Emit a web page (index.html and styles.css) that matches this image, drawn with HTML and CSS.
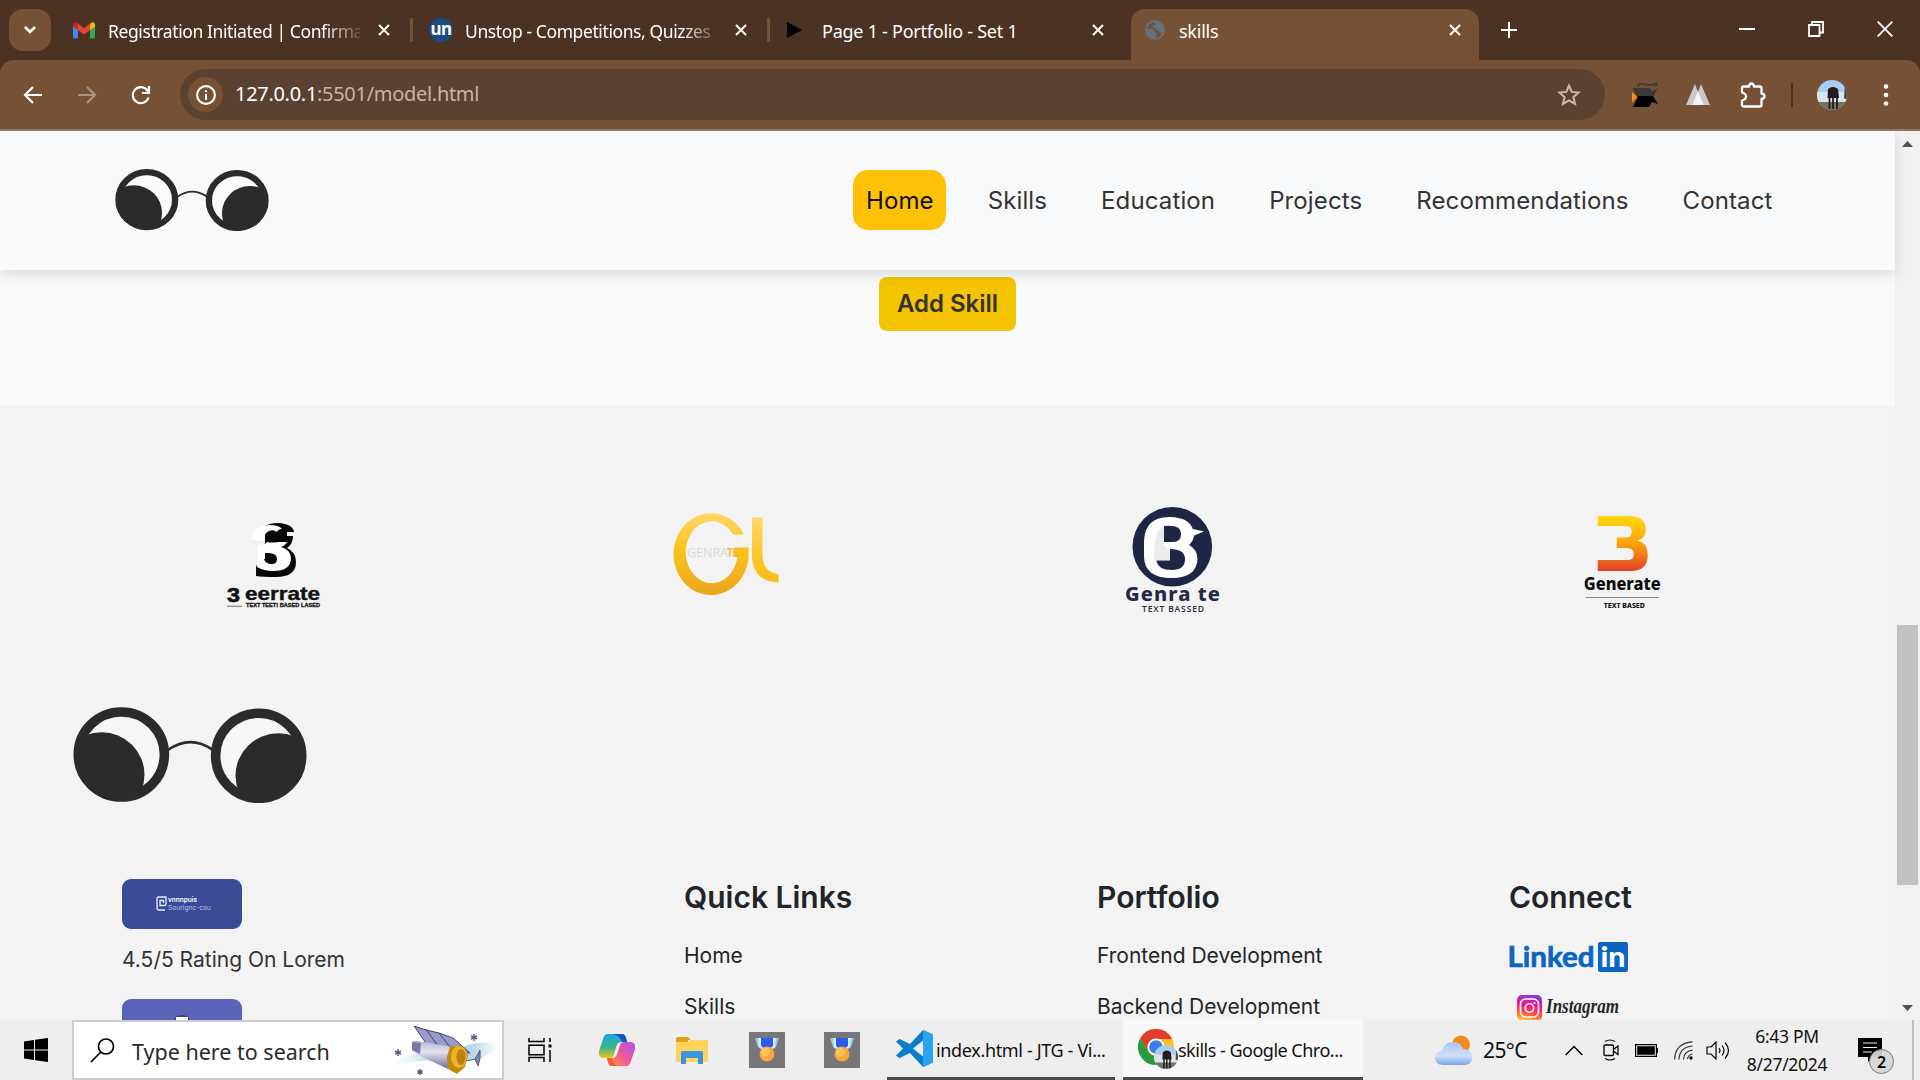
FILE: index.html
```html
<!DOCTYPE html>
<html lang="en">
<head>
<meta charset="utf-8">
<title>skills</title>
<link rel="stylesheet" href="styles.css">
</head>
<body>
<svg class="defs" width="0" height="0">
  <defs>
    <symbol id="glasses" viewBox="70 79 702 291" preserveAspectRatio="none">
      <path d="M355 209Q422 162 488 208" fill="none" stroke="#2b2b2b" stroke-width="8"/>
      <clipPath id="lensL"><circle cx="215" cy="223" r="130"/></clipPath>
      <clipPath id="lensR"><circle cx="627" cy="227" r="130"/></clipPath>
      <circle cx="215" cy="223" r="129" fill="none" stroke="#2b2b2b" stroke-width="29"/>
      <circle cx="627" cy="227" r="129" fill="none" stroke="#2b2b2b" stroke-width="29"/>
      <circle cx="215" cy="223" r="115" fill="#fff" fill-opacity=".3"/>
      <circle cx="627" cy="227" r="115" fill="#fff" fill-opacity=".3"/>
      <circle cx="156" cy="284" r="128.500" fill="#2b2b2b" clip-path="url(#lensL)"/>
      <circle cx="686" cy="287" r="128.500" fill="#2b2b2b" clip-path="url(#lensR)"/>
    </symbol>
    <symbol id="close" viewBox="0 0 12 12"><path d="M1 1l10 10M11 1L1 11" stroke="#fff" stroke-width="2" fill="none"/></symbol>
    <symbol id="medal" viewBox="0 0 36 36">
      <rect width="36" height="36" fill="#777"/>
      <path d="M6 6h24l-3 9-5 4h-8l-5-4z" fill="#8fc7ff"/>
      <path d="M9 6h4v11l-3-2zM27 6h-4v11l3-2z" fill="#dceeff"/>
      <path d="M12 6h12v8l-6 4-6-4z" fill="#2f5bea"/>
      <circle cx="18" cy="22" r="7.500" fill="#f9a63a"/><circle cx="16.500" cy="20" r="4.500" fill="#ffc65c"/>
    </symbol>
    <clipPath id="avatarClip"><circle cx="15" cy="15" r="15"/></clipPath>
    <symbol id="avatar" viewBox="0 0 30 30">
      <g clip-path="url(#avatarClip)">
        <rect width="30" height="30" fill="#a9cdf0"/><rect y="12" width="30" height="10" fill="#dbe4ea"/>
        <rect y="22" width="30" height="8" fill="#6f7560"/>
        <path d="M28 4l2 2v14l-3-2z" fill="#4b4a3a"/>
        <path d="M11 9q5-4 10 0l1 9H10.500z" fill="#241c1c"/>
        <path d="M12.500 17v12M16 17v12M20 17v12" stroke="#241c1c" stroke-width="1.800"/>
      </g>
    </symbol>
  </defs>
</svg>

<div class="tabstrip">
  <div class="tab-search"><svg width="14" height="10" viewBox="0 0 14 10"><path d="M2 2l5 5 5-5" fill="none" stroke="#fff" stroke-width="2.500"/></svg></div>
  <div class="tab">
    <span class="tab-icon"><svg width="22" height="17" viewBox="0 0 22 17"><path d="M0 3v12q0 1.500 1.500 1.500H5V6z" fill="#4285f4"/><path d="M22 3v12q0 1.500-1.500 1.500H17V6z" fill="#34a853"/><path d="M17 2v6l5-3.500V2.500Q21-1 18 .8z" fill="#fbbc04"/><path d="M5 2v6L0 4.500V2.500Q1-1 4 .8z" fill="#c5221f"/><path d="M4.800 1.500L11 6.200l6.200-4.700V8L11 12.500 4.800 8z" fill="#ea4335"/></svg></span>
    <span class="tab-title long">Registration Initiated | Confirma</span>
    <svg class="tab-close" width="12" height="12"><use href="#close"/></svg>
  </div>
  <div class="tab">
    <span class="tab-icon"><span class="un">un</span></span>
    <span class="tab-title long">Unstop - Competitions, Quizzes</span>
    <svg class="tab-close" width="12" height="12"><use href="#close"/></svg>
  </div>
  <div class="tab plain">
    <span class="tab-icon play"><svg width="15" height="16" viewBox="0 0 15 16"><path d="M0 0l15 8-15 8z" fill="#000"/></svg></span>
    <span class="tab-title">Page 1 - Portfolio - Set 1</span>
    <svg class="tab-close" width="12" height="12"><use href="#close"/></svg>
  </div>
  <div class="tab active">
    <span class="tab-icon"><svg width="20" height="20" viewBox="0 0 20 20"><circle cx="10" cy="10" r="9" fill="none" stroke="#64707b" stroke-width="2"/><path d="M1.500 9h6q2 0 2 2t2 2v4l-1 2q-9 0-9-10zM10 1h3l5 5v6l-3 1q-1-3-4-3V8H8V5h2z" fill="#64707b"/></svg></span>
    <span class="tab-title">skills</span>
    <svg class="tab-close" width="12" height="12"><use href="#close"/></svg>
  </div>
  <svg class="new-tab" width="16" height="16" viewBox="0 0 16 16"><path d="M8 0v16M0 8h16" stroke="#fff" stroke-width="2"/></svg>
  <div class="window-controls">
    <svg width="16" height="16" viewBox="0 0 16 16"><path d="M0 8h16" stroke="#fff" stroke-width="2"/></svg>
    <svg width="16" height="16" viewBox="0 0 16 16"><path d="M1 4h10.500v11H1zM4 4V1h11v10.500h-3.500" fill="none" stroke="#fff" stroke-width="1.800"/></svg>
    <svg width="16" height="16" viewBox="0 0 16 16"><path d="M.7.7l14.600 14.600M15.300.7L.7 15.300" stroke="#fff" stroke-width="1.800"/></svg>
  </div>
</div>

<div class="toolbar-wrap">
<div class="toolbar">
  <div class="nav-buttons">
    <svg width="20" height="20" viewBox="0 0 20 20"><path d="M19 10H2.500M10 2l-8 8 8 8" fill="none" stroke="#fff" stroke-width="2.200"/></svg>
    <svg width="20" height="20" viewBox="0 0 20 20"><path d="M1 10h16.500M10 2l8 8-8 8" fill="none" stroke="#ad9482" stroke-width="2.200"/></svg>
    <svg width="20" height="20" viewBox="0 0 20 20"><path d="M17.500 12.500A8 8 0 1 1 16 5l1.500 2M18 1v7h-7" fill="none" stroke="#fff" stroke-width="2.200"/></svg>
  </div>
  <div class="omnibox">
    <span class="site-info"><svg width="20" height="20" viewBox="0 0 20 20"><circle cx="10" cy="10" r="8.900" fill="none" stroke="#fff" stroke-width="2.100"/><path d="M10 9v6M10 5.200v2.100" stroke="#fff" stroke-width="2"/></svg></span>
    <span class="url"><b>127.0.0.1</b>:5501/model.html</span>
    <svg class="star" width="24" height="24" viewBox="0 0 24 24"><path d="M12 2.500l2.700 6.400 7 .6-5.300 4.600 1.600 6.800-6-3.600-6 3.600 1.600-6.800L2.300 9.500l7-.6z" fill="none" stroke="#c6bab2" stroke-width="2"/></svg>
  </div>
  <svg class="ext-a" width="26" height="26" viewBox="0 0 26 26"><path d="M0 10l5 5-5 6z" fill="#ff8a1c"/><path d="M1 6h16l3 4 5-3-4 7 5 8-6-2-3 5H1l5-10z" fill="#000"/><path d="M1 6h16l3 4 5-3-4 7H6z" fill="#3a3a3a"/><path d="M6 5Q6 1 11 2t7 1 7-1" fill="none" stroke="#3a3a3a" stroke-width="1.800"/><circle cx="23.500" cy="2.500" r="2" fill="#3a3a3a"/></svg>
  <svg class="ext-b" width="24" height="21" viewBox="0 0 24 21"><path d="M9 0l8 21H0zM15 0l9 21H7z" fill="#c9c9c9"/><path d="M12 7l5.500 14H6.500z" fill="#f5f5f5"/></svg>
  <svg class="ext-c" width="26" height="26" viewBox="0 0 26 26"><path d="M3.500 4.500h5.500q.5-3 2.500-3t2.500 3h6q1.500 0 1.500 1.500v5.500q3 .5 3 2.800t-3 2.700V23q0 1.500-1.500 1.500h-16Q2 24.500 2 23v-4.500q4-1 4-4t-4-4V6q0-1.500 1.500-1.500z" fill="none" stroke="#fff" stroke-width="2.300" stroke-linejoin="round"/></svg>
  <span class="bar-sep"></span>
  <svg class="profile" width="30" height="30"><use href="#avatar"/></svg>
  <svg class="menu" width="6" height="24" viewBox="0 0 6 24"><g fill="#fff"><circle cx="3" cy="3.500" r="2.300"/><circle cx="3" cy="12" r="2.300"/><circle cx="3" cy="20.500" r="2.300"/></g></svg>
</div>
</div>

<div class="viewport">
  <div class="page">
    <header class="site-header">
      <svg class="brand" width="154" height="62"><use href="#glasses"/></svg>
      <nav class="site-nav">
        <a class="current">Home</a><a>Skills</a><a>Education</a><a>Projects</a><a>Recommendations</a><a>Contact</a>
      </nav>
    </header>
    <section class="skills"><button class="add-skill">Add Skill</button></section>
    <footer class="site-footer">
      <div class="partners">
        <svg width="120" height="110" viewBox="213 503 120 110">
          <path d="M262 528q6-5 16-5 15 1 16 9h-7v4h6q0 8-6 12 9 4 9 14 0 15-20 15-13 0-20-1v-9l9-24V531z" fill="#050808"/>
          <path d="M251 540q3-14 18-15 10 0 13 4-4 0-5 3-4-3-8-1-5 2-5 9v1h-6v-1z" fill="#fff"/>
          <path d="M258 545q8 0 9-3 4 1 12 0h8q-2 4-6 5 10 3 10 11 0 13-18 13-9 0-16-4v-8h7q1 5 8 5 5 0 5-5 0-6-9-6h-3v6h-7z" fill="#fff"/>
          <g font-family="Liberation Sans" font-weight="700" fill="#111">
            <text x="227" y="602" font-size="20" textLength="13" lengthAdjust="spacingAndGlyphs" stroke="#111" stroke-width=".6">3</text>
            <text x="245" y="600" font-size="18.500" textLength="75" lengthAdjust="spacingAndGlyphs" stroke="#111" stroke-width=".4">eerrate</text>
            <text x="246" y="607" font-size="5.500" textLength="74" lengthAdjust="spacingAndGlyphs" stroke="#111" stroke-width=".3">TEXT TEET! BASED LASED</text>
          </g>
          <path d="M227 606.300h15" stroke="#999" stroke-width="1.500"/>
        </svg>
        <svg width="120" height="110" viewBox="662 504.500 120 110">
          <defs><linearGradient id="gold" gradientUnits="userSpaceOnUse" x1="0" y1="514" x2="0" y2="596"><stop offset="0" stop-color="#ffd76a"/><stop offset=".45" stop-color="#fcc21c"/><stop offset="1" stop-color="#e9a61e"/></linearGradient><linearGradient id="gold2" x1="0" y1="0" x2="0" y2="1"><stop offset="0" stop-color="#ffd76a"/><stop offset=".6" stop-color="#fdc62c"/><stop offset="1" stop-color="#fbbc14"/></linearGradient></defs>
          <path d="M744 536H733A26 31 0 1 0 737.500 558H735V549H748.500V553A37.500 41 0 1 1 744 536z" fill="url(#gold)"/>
          <path d="M752 519h10.500v39q1 16 16 17.500v8.500q-26-1-26.500-27z" fill="url(#gold2)"/>
          <text x="687" y="558" font-family="Open Sans" font-size="12" fill="#d9d9d9" textLength="41" lengthAdjust="spacingAndGlyphs">GENRA</text>
          <text x="727" y="558" font-family="Liberation Sans" font-weight="700" font-size="12" fill="#fbb815" textLength="12" lengthAdjust="spacingAndGlyphs">TE</text>
        </svg>
        <svg width="120" height="110" viewBox="1112 503 120 110">
          <circle cx="1172.300" cy="546.700" r="39.800" fill="#1d2644"/>
          <path d="M1193 529l11 2.500-11 4.500z" fill="#fff"/>
          <path d="M1144 541q1-24 25-24 24 0 25 18 0 5-5 10 8 4 8.500 14-1 19-25.500 19-28 0-28-22z" fill="#fff"/>
          <path d="M1164 527l-5 3q-5 6-5 30h16v-9l-6-6z" fill="#ececec"/>
          <path d="M1164 526q17-2 17 8 0 8-8 8h-9zM1170 549q15 0 15 10 0 11-13 11-14 0-15.500-9.500H1170z" fill="#1d2644"/>
          <g fill="#222a47">
            <text x="1125" y="601" font-family="Noto Sans" font-size="20" font-weight="800" textLength="95" lengthAdjust="spacing">Genra te</text>
            <text x="1142" y="611.500" font-family="Open Sans" font-size="8.500" font-weight="600" textLength="62" lengthAdjust="spacing">TEXT BASSED</text>
          </g>
        </svg>
        <svg width="120" height="110" viewBox="1561.250 503 120 110">
          <defs><linearGradient id="fire" x1="0" y1="0" x2="0" y2="1"><stop offset="0" stop-color="#ffd90a"/><stop offset=".5" stop-color="#fba30c"/><stop offset="1" stop-color="#e0402a"/></linearGradient></defs>
          <path d="M1598 516h32q16 0 16 14 0 8-8 10.500 10 2 10 14.500 0 16-17 16h-33v-11h30q6 0 6-6 0-6-7-6h-10v-10.500h9q6 0 6-6 0-5.500-6-5.500h-28z" fill="url(#fire)"/>
          <text x="1584" y="589.500" font-family="Noto Sans" font-weight="800" font-size="17" fill="#0a0a0a" textLength="77" lengthAdjust="spacingAndGlyphs">Generate</text>
          <path d="M1586 597.500h73" stroke="#888" stroke-width="1"/>
          <text x="1604" y="607.700" font-family="Noto Sans" font-weight="800" font-size="6.800" fill="#0a0a0a" textLength="41" lengthAdjust="spacingAndGlyphs">TEXT BASED</text>
        </svg>
      </div>
      <svg class="footer-brand" width="234" height="96"><use href="#glasses"/></svg>
      <div class="footer-cols">
        <div class="ratings">
          <div class="badge-card">
            <svg width="120" height="50" viewBox="0 0 120 50"><path d="M35 19.500q0-1.500 1.500-1.500H44v7q0 1.500-1.500 1.500H38V21.500h3.500v2.500M35 19v7q0 1 1 1M35 27.500V29q0 2 2 2h6" fill="none" stroke="#e8ebf7" stroke-width="1.300"/><text x="46" y="23.300" font-family="Inter" font-weight="600" font-size="6.500" fill="#fff" textLength="29" lengthAdjust="spacingAndGlyphs">vnnnpuis</text><text x="46" y="31" font-family="Inter" font-size="6.500" fill="#b9c2e6" textLength="43" lengthAdjust="spacingAndGlyphs">Sourignc-cou</text></svg>
          </div>
          <p>4.5/5 Rating On Lorem</p>
          <div class="badge-card light">
            <svg width="120" height="50" viewBox="0 0 120 50"><path d="M52 21q2-5 8-5t8 5z" fill="#384684"/><rect x="54" y="18" width="12" height="8" fill="#fffdf0"/></svg>
          </div>
        </div>
        <div class="col"><h3>Quick Links</h3><a>Home</a><a>Skills</a></div>
        <div class="col"><h3>Portfolio</h3><a>Frontend Development</a><a>Backend Development</a></div>
        <div class="col">
          <h3>Connect</h3>
          <svg class="linkedin" width="122" height="32" viewBox="-2 0 122 32"><text x="-1.500" y="26" font-family="Lato" font-weight="700" font-size="29" fill="#0a66c2" stroke="#0a66c2" stroke-width=".7" textLength="87" lengthAdjust="spacingAndGlyphs">Linked</text><rect x="89" y="1" width="30" height="30" rx="2" fill="#0a66c2"/><text x="91.500" y="26" font-family="Lato" font-weight="900" font-size="28" fill="#fff" textLength="25" lengthAdjust="spacingAndGlyphs">in</text></svg>
          <svg class="instagram" width="120" height="34" viewBox="0 0 120 34"><defs><linearGradient id="ig" x1=".3" y1="1" x2=".5" y2="0"><stop offset="0" stop-color="#fecb4a"/><stop offset=".3" stop-color="#ff5a3c"/><stop offset=".6" stop-color="#f5148c"/><stop offset="1" stop-color="#8a3ad8"/></linearGradient></defs><rect x="8" y="0" width="25" height="26" rx="5" fill="url(#ig)"/><rect x="11.500" y="4" width="18" height="18" rx="5" fill="none" stroke="#fff" stroke-width="1.600"/><circle cx="20.500" cy="13" r="4.200" fill="none" stroke="#fff" stroke-width="1.600"/><circle cx="25.500" cy="8" r="1.100" fill="#fff"/><text x="37" y="18" font-family="Liberation Serif" font-style="italic" font-weight="700" font-size="20" fill="#262626" textLength="73" lengthAdjust="spacingAndGlyphs">Instagram</text></svg>
        </div>
      </div>
    </footer>
  </div>
  <div class="scrollbar">
    <svg width="11" height="6" viewBox="0 0 11 6"><path d="M0 6l5.500-6L11 6z" fill="#505050"/></svg>
    <span class="thumb"></span>
    <svg width="11" height="6" viewBox="0 0 11 6"><path d="M0 0l5.500 6L11 0z" fill="#505050"/></svg>
  </div>
</div>

<div class="taskbar">
  <svg class="start" width="24" height="24" viewBox="0 0 24 24"><path d="M0 3.400L10 2v9.500H0zM11 1.800L24 0v11.500H11zM0 12.500h10V22L0 20.600zM11 12.500h13V24l-13-1.800z" fill="#000"/></svg>
  <div class="search">
    <svg width="25" height="25" viewBox="0 0 25 25"><circle cx="16" cy="8.500" r="7.500" fill="none" stroke="#000" stroke-width="1.700"/><path d="M10.800 14L1 24" stroke="#000" stroke-width="1.700"/></svg>
    <span>Type here to search</span>
    <svg class="satellite" width="108" height="50" viewBox="0 0 108 50">
      <defs><linearGradient id="haze"><stop offset="0" stop-color="#cfe3f2" stop-opacity="0"/><stop offset=".4" stop-color="#b9d6ea"/><stop offset=".75" stop-color="#b9d6ea"/><stop offset="1" stop-color="#cfe3f2" stop-opacity="0"/></linearGradient><linearGradient id="hull" x1="0" y1="0" x2="0" y2="1"><stop offset="0" stop-color="#b5b4cf"/><stop offset=".4" stop-color="#e4e3ef"/><stop offset="1" stop-color="#696b9e"/></linearGradient></defs>
      <path d="M0 38q25-14 54-9 30-16 54-10-10 15-36 17Q30 32 0 42z" fill="url(#haze)"/>
      <path d="M22 1l12 4 13 3 14 5 17 15-40-4z" fill="#9a99cc" stroke="#3e4379"/><path d="M34 4l14 20M47 8l14 18" stroke="#3e4379"/>
      <path d="M20 18q1-3 6-2l34 6-4 22-34-16z" fill="url(#hull)"/><path d="M20 17l9 1-1 11-8-4z" fill="#7779a3"/>
      <path d="M58 21l14 1 4 8-3 12-8 7-9-5-1-12z" fill="#c18a0c"/><ellipse cx="67" cy="32" rx="8" ry="11" fill="#efb321"/><ellipse cx="69" cy="32" rx="4.500" ry="8" fill="#b88311"/>
      <path d="M74 36l9-2 5-9q1 9-2 16l-3-7" fill="#7687a3" stroke="#4f6380"/>
      <path d="M82 9v7M79 11l6 3M85 11l-6 3M6 24v7M3 26l6 3M9 26l-6 3M28 44v6M25.500 45.500l5 3M30.500 45.500l-5 3" stroke="#53618c" stroke-width="1.500"/>
    </svg>
  </div>
  <svg class="taskview" width="24" height="24" viewBox="0 0 24 24"><path d="M1 0v3.500h15V0M1 24v-4.500h15V24M1 7.200h15v9.500H1zM22 0v4M22 12v12" fill="none" stroke="#000" stroke-width="1.500"/><path d="M20.500 6.500h3v3h-3z"/></svg>
  <svg class="copilot" width="36" height="34" viewBox="0 0 36 34">
    <defs><linearGradient id="cp1" x1="0" y1="0" x2="0" y2="1"><stop offset="0" stop-color="#1aa6e8"/><stop offset=".55" stop-color="#38b58a"/><stop offset="1" stop-color="#f2c51b"/></linearGradient><linearGradient id="cp2" x1="1" y1="0" x2="0" y2="1"><stop offset="0" stop-color="#a855f0"/><stop offset=".5" stop-color="#f0559a"/><stop offset="1" stop-color="#ff9a3d"/></linearGradient></defs>
    <path d="M9 1h14q3 0 4 4l1 4h-5q-4 0-5 4l-3 9q-1 3-4 3H4q-5-1-4-7L4 6q1-5 5-5z" fill="url(#cp1)"/>
    <path d="M27 33H13q-3 0-4-4l-1-4h5q4 0 5-4l3-9q1-3 4-3h7q5 1 4 7l-4 12q-1 5-5 5z" fill="url(#cp2)"/>
    <path d="M14 1h9q3 0 4 4l1 4h-5q-3-7-9-8z" fill="#1a50c8"/><path d="M8 25h5q1 6 6 8h-6q-3 0-4-4z" fill="#f5602e"/>
    <path d="M17.500 13q1-3 3.500-3.800L17.500 21q-1 3-3.500 3.800z" fill="#eee"/>
  </svg>
  <svg class="folder" width="32" height="27" viewBox="0 0 32 27"><path d="M0 2q0-2 2-2h10l3 3h-3v6H0z" fill="#dfa012"/><path d="M0 5h12l3-2h15q2 0 2 2v18q0 2-2 2H2q-2 0-2-2z" fill="#ffd35c"/><path d="M5 27V16q0-2 2-2h18q2 0 2 2v11h-5v-6H10v6z" fill="#3a96dd"/></svg>
  <svg class="medal" width="36" height="36"><use href="#medal"/></svg>
  <svg class="medal second" width="36" height="36"><use href="#medal"/></svg>
  <div class="task">
    <svg width="37" height="37" viewBox="0 0 37 37"><path d="M27 0L37 4.500v28L27 37 14 23 3.500 28 0 25.500 7 18.500 0 11.500 3.500 9l10.500 5zM27 10.500L17 18.500l10 8z" fill="#0a7dc8" fill-rule="evenodd"/><path d="M27 0l10 4.500v28L27 37z" fill="#2aa3f0"/></svg>
    <span>index.html - JTG - Vi...</span>
  </div>
  <div class="task front">
    <svg width="40" height="40" viewBox="0 0 40 40"><circle cx="18" cy="18" r="18" fill="#fbc116"/><path d="M2.400 9A18 18 0 0 1 33.600 9L34 10H18a8.500 8.500 0 0 0-7.500 12.500z" fill="#e33b2e"/><path d="M2.400 9A18 18 0 0 0 18 36l7.500-13.500a8.500 8.500 0 0 1-15 0z" fill="#2a9a47"/><circle cx="18" cy="18" r="8.500" fill="#fff"/><circle cx="18" cy="18" r="6.800" fill="#3a7de8"/><g transform="translate(16 16) scale(.8)"><use href="#avatar" width="30" height="30"/></g></svg>
    <span>skills - Google Chro...</span>
  </div>
  <div class="tray">
    <svg class="weather" width="37" height="31" viewBox="0 0 37 31"><defs><linearGradient id="cloud" x1="0" y1="0" x2="0" y2="1"><stop offset="0" stop-color="#a5c6f4"/><stop offset=".6" stop-color="#cfe0fa"/><stop offset="1" stop-color="#7ea4e8"/></linearGradient></defs><circle cx="26" cy="9.500" r="9" fill="#f08c1c"/><path d="M8 30q-8-.5-8-7 0-6 7-7 2-9 11-9 8 0 10 7 9 0 9 8 0 8-8 8z" fill="url(#cloud)"/></svg>
    <span class="temp">25°C</span>
    <svg class="up" width="18" height="11" viewBox="0 0 18 11"><path d="M.7 10L9 1.500 17.300 10" fill="none" stroke="#000" stroke-width="1.500"/></svg>
    <svg class="meet" width="16" height="22" viewBox="0 0 16 22"><rect x="1" y="6" width="9.500" height="10.500" rx="1" fill="none" stroke="#000" stroke-width="1.300"/><path d="M11 10l4-3v8.500l-4-3M2 2.500q5-3 10 0M2 19.500q5 3 10 0" fill="none" stroke="#000" stroke-width="1.200"/></svg>
    <svg class="battery" width="23" height="13" viewBox="0 0 23 13"><path d="M.6.6h20.800v11.800H.6z" fill="none" stroke="#000" stroke-width="1.200"/><path d="M2.200 2.200h17.600v8.600H2.200zM21.500 4H23v5h-1.500z"/></svg>
    <svg class="wifi" width="20" height="19" viewBox="0 0 20 19"><path d="M.7 18.500Q1 2 18.500.8M5 18.500Q5.500 6 18.500 5M9.500 18.500q.5-8.500 9-9.300M13.500 18q.5-4 5-5" fill="none" stroke="#333" stroke-width="1.200"/><circle cx="17" cy="17" r="1.700"/></svg>
    <svg class="volume" width="24" height="19" viewBox="0 0 24 19"><path d="M1 6h4l5-5v17l-5-5H1z" fill="none" stroke="#000" stroke-width="1.200"/><path d="M13 7q2 2.500 0 5M16 4.500q4 5 0 10M19 1.500q7 8 0 16" fill="none" stroke="#000" stroke-width="1.200"/></svg>
    <div class="clock"><span>6:43 PM</span><span>8/27/2024</span></div>
    <svg class="notify" width="38" height="38" viewBox="0 0 38 38"><path d="M0 0h24v19H15l-5 5v-5H0z"/><path d="M5 5h14M5 9.500h14M5 14h9" stroke="#eee" stroke-width="1"/><circle cx="23.500" cy="23.500" r="12" fill="#d6d6d6" fill-opacity=".93" stroke="#777"/><text x="23.500" y="29.500" text-anchor="middle" font-family="Noto Sans" font-weight="600" font-size="16">2</text></svg>
    <span class="desktop-edge"></span>
  </div>
</div>
</body>
</html>
```
FILE: styles.css
```css
* { box-sizing: border-box; }
html, body { margin: 0; height: 100%; overflow: hidden; }
body { display: flex; flex-direction: column; width: 1920px; height: 1080px; font-family: "Noto Sans", "Open Sans", sans-serif; background: #f3f3f3; }
svg { display: block; flex: none; }
.defs { position: absolute; }

/* browser tabs */
.tabstrip { flex: none; display: flex; height: 60px; padding-left: 9px; background: #4c3223; color: #fff; }
.tab-search { flex: none; display: grid; place-items: center; width: 42px; height: 42px; margin: 9px 6px 0 0; border-radius: 14px; background: #765135; }
.tab { position: relative; flex: none; display: flex; align-items: center; width: 357px; padding-left: 15px; }
.tab::after { content: ""; width: 3px; height: 24px; margin-left: 20px; border-radius: 1px; background: #765135; }
.tab.plain::after, .tab.active::after { visibility: hidden; }
.tab-icon { flex: none; display: grid; place-items: center; width: 24px; height: 24px; }
.tab-icon.play { place-items: center start; padding-left: 1px; }
.un { display: block; width: 24px; height: 24px; border-radius: 50%; background: #1c4980; font: 700 17px/22px "Noto Sans", sans-serif; text-align: center; letter-spacing: -.5px; }
.tab-title { flex: none; width: 252px; margin-left: 12px; padding-top: 2px; white-space: nowrap; font-size: 18px; line-height: 26px; letter-spacing: -.25px; }
.tab-title.long { font-size: 17.500px; letter-spacing: -.4px; -webkit-mask-image: linear-gradient(90deg, #000 215px, transparent 258px); mask-image: linear-gradient(90deg, #000 215px, transparent 258px); }
.tab-close { margin-left: 18px; }
.tab.active { z-index: 0; }
.tab.active::before { content: ""; position: absolute; z-index: -1; left: 3px; right: 6px; top: 9px; bottom: 0; border-radius: 14px 14px 0 0; background: #765135; }
.new-tab { margin: 22px 0 0 16px; }
.window-controls { display: flex; gap: 53px; margin: 21px 27px 0 auto; }

.toolbar-wrap { flex: none; background: #4c3223; }
.toolbar { display: flex; align-items: center; height: 71px; border-bottom: 2px solid #957560; border-radius: 14px 14px 0 0; background: #765135; }
.nav-buttons { display: flex; gap: 34px; width: 180px; padding-left: 23px; }
.omnibox { display: flex; align-items: center; width: 1425px; height: 51px; padding-left: 8px; border-radius: 26px; background: #5b4130; }
.site-info { display: grid; place-items: center; width: 35px; height: 35px; border-radius: 50%; background: #765135; }
.url { margin: -2px 0 0 12px; color: #c6b5a9; font-size: 20px; line-height: 28px; letter-spacing: -.3px; }
.url b { color: #fff; font-weight: 400; }
.star { margin: 0 24px 0 auto; }
.ext-a { margin-left: 27px; }
.ext-b { margin-left: 28px; }
.ext-c { margin-left: 30px; }
.bar-sep { width: 2px; height: 24px; margin-left: 25px; background: #4c3223; }
.profile { margin-left: 24px; }
.menu { margin-left: 36px; }

/* page */
.viewport { flex: none; display: flex; height: 889px; overflow: hidden; }
.page { width: 1895px; font-family: Inter, sans-serif; }
.site-header { position: relative; z-index: 1; display: flex; align-items: center; justify-content: space-between; height: 139px; padding: 0 110px 1px 115px; background: #f8f9fb; box-shadow: 0 5px 12px rgba(0, 0, 0, .12); }
.site-nav { display: flex; gap: 29px; color: #333; font-size: 24px; line-height: 35px; letter-spacing: .12px; }
.site-nav a { padding: 12.500px 12.500px; border-radius: 15px; }
.site-nav .current { color: #111; background: #ffc107; }
.skills { display: flex; align-items: flex-start; justify-content: center; height: 136px; padding-top: 7px; background: #f8fafc; }
.add-skill { width: 137px; height: 54px; padding: 0; border: 0; border-radius: 8px; background: #f5c400; color: #333; font: 600 24px/54px Inter, sans-serif; }
.site-footer { background: #f3f3f3; }
.partners { display: grid; grid-template-columns: repeat(4, 449.500px); justify-items: center; padding: 97px 0 0 48px; }
.footer-brand { margin: 94px 0 76px 73px; }
.footer-cols { display: grid; grid-template-columns: 562px 413px 412px 1fr; padding-left: 122px; }
.badge-card { width: 120px; height: 50px; border-radius: 9px; background: #394b97; overflow: hidden; }
.badge-card.light { background: #5964b9; }
.ratings p { margin: 15px 0 24px; color: #333; font-size: 21px; line-height: 31px; font-weight: 400; }
.col { display: flex; flex-direction: column; align-items: flex-start; }
.col h3 { margin: 0; color: #212529; font-size: 30px; line-height: 37px; font-weight: 600; }
.col a { color: #212529; font-size: 21px; line-height: 30px; margin-top: 25px; }
.col a + a { margin-top: 21px; }
.linkedin { margin: 25px 0 0 -2px; }
.instagram { margin-top: 22px; }

.scrollbar { display: flex; flex-direction: column; align-items: center; width: 25px; padding: 10px 0 9px; background: #f1f1f1; }
.thumb { width: 21px; height: 260px; margin-top: 478px; background: #c1c1c1; }
.scrollbar svg:last-child { margin-top: auto; }

/* taskbar */
.taskbar { flex: none; display: flex; align-items: center; height: 60px; background: #eee; color: #111; font-size: 18px; }
.start { margin-left: 24px; }
.search { display: flex; align-items: center; width: 432px; height: 60px; margin-left: 24px; padding-left: 16px; border: 2px solid #ccc; background: #fff; font-size: 21.500px; white-space: nowrap; }
.search span { width: 260px; margin-left: 17px; padding-top: 2px; color: #2a2a2a; }
.taskview { margin-left: 24px; }
.copilot { margin-left: 47px; }
.folder { margin-left: 41px; }
.medal { margin-left: 41px; }
.medal.second { margin-left: 39px; }
.task { display: flex; align-items: center; width: 228px; height: 60px; margin-left: 27px; padding-left: 9px; border-bottom: 3px solid #4a4a4a; white-space: nowrap; letter-spacing: -.35px; }
.task span { margin-left: 3px; padding-top: 3px; }
.task.front { width: 240px; margin-left: 8px; padding-left: 15px; background: #f8f8f8; letter-spacing: -.5px; }
.task.front span { margin-left: 0; }
.tray { display: flex; align-items: center; flex: 1; }
.weather { margin-left: 72px; }
.temp { width: 46px; margin-left: 11px; font-size: 21px; letter-spacing: -.6px; white-space: nowrap; }
.up { margin-left: 36px; }
.meet { margin-left: 20px; }
.battery { margin-left: 16px; }
.wifi { margin-left: 16px; }
.volume { margin-left: 12px; }
.clock { display: flex; flex-direction: column; align-items: center; width: 96px; margin-left: 9px; font-size: 17.500px; line-height: 28px; letter-spacing: -.3px; }
.notify { margin: 14px 0 0 23px; }
.desktop-edge { width: 2px; height: 60px; margin-left: 16px; background: #bdbdbd; }
```
